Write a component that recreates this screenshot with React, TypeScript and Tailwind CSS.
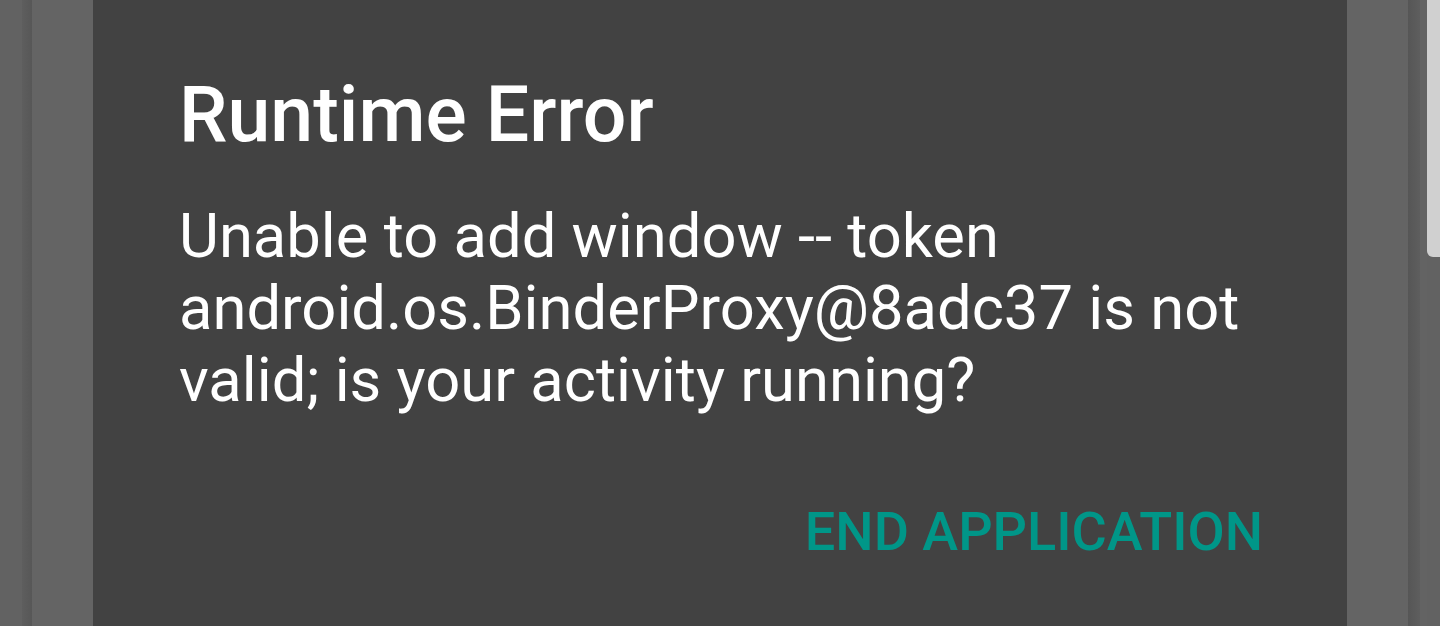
export default function App() {
  return (
    <div className="flex h-[626px] w-full overflow-hidden bg-[#626262] font-['Roboto',sans-serif]">
      {/* left edge of the card behind */}
      <div className="w-[22px] shrink-0" />
      <div className="w-[10px] shrink-0 bg-gradient-to-r from-[#5e5e5e] to-[#575757]" />

      <div className="flex flex-1 bg-[#646464]">
        <div className="w-[61px] shrink-0" />

        {/* dialog */}
        <div className="flex w-[1254px] shrink-0 flex-col bg-[#424242] pl-[86px] pr-[84px] pt-[75px] text-white">
          <h1 className="text-[77px] font-medium leading-[80px]">Runtime Error</h1>
          <p className="mt-[45px] text-[61.5px] leading-[72px]">
            Unable to add window -- token android.os.BinderProxy@8adc37 is not valid; is your activity running?
          </p>
          <div className="mt-[88px] flex justify-end">
            <button className="text-[54px] font-medium uppercase leading-[56px] text-[#009688]">
              End Application
            </button>
          </div>
        </div>

        <div className="w-[61px] shrink-0" />
      </div>

      <div className="w-[12px] shrink-0 bg-gradient-to-r from-[#565656] to-[#5e5e5e]" />
      <div className="w-[7px] shrink-0 bg-[#636363]" />
      <div className="h-[257px] w-[13px] shrink-0 rounded-bl-[6px] bg-[#d0d0d0]" />
    </div>
  );
}
